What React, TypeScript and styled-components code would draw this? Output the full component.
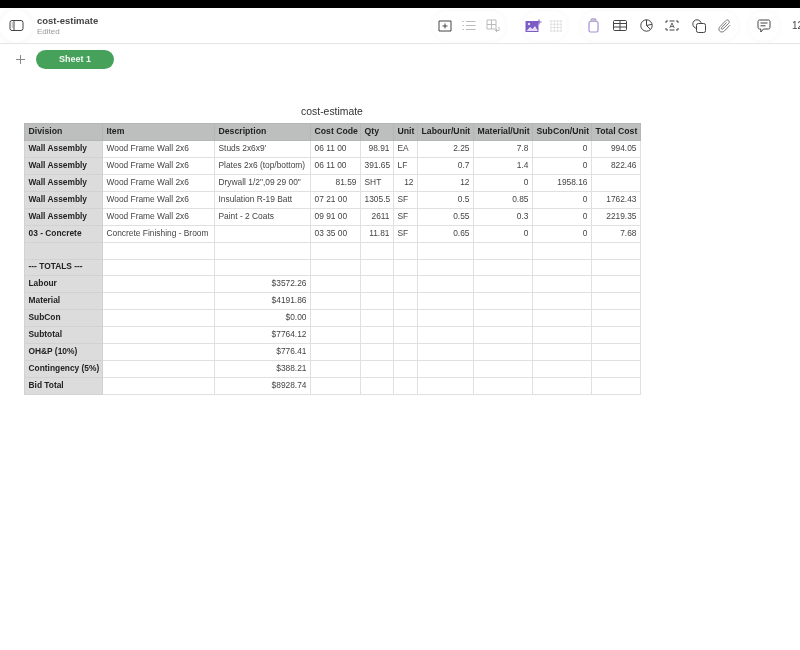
import styled, { createGlobalStyle } from "styled-components";

const GlobalStyle = createGlobalStyle`
  html, body {
    margin: 0;
    height: 100%;
    background: #fff;
    font-family: "Liberation Sans", Arial, sans-serif;
  }
`;

const columns = [78, 112, 96, 50, 33, 24, 56, 59, 59, 49];

const header = ["Division", "Item", "Description", "Cost Code", "Qty", "Unit", "Labour/Unit", "Material/Unit", "SubCon/Unit", "Total Cost"];

const rows = [
  ["Wall Assembly", "Wood Frame Wall 2x6", "Studs 2x6x9'", "06 11 00", "98.91", "EA", "2.25", "7.8", "0", "994.05"],
  ["Wall Assembly", "Wood Frame Wall 2x6", "Plates 2x6 (top/bottom)", "06 11 00", "391.65", "LF", "0.7", "1.4", "0", "822.46"],
  ["Wall Assembly", "Wood Frame Wall 2x6", 'Drywall 1/2",09 29 00"', "81.59", "SHT", "12", "12", "0", "1958.16", ""],
  ["Wall Assembly", "Wood Frame Wall 2x6", "Insulation R-19 Batt", "07 21 00", "1305.5", "SF", "0.5", "0.85", "0", "1762.43"],
  ["Wall Assembly", "Wood Frame Wall 2x6", "Paint - 2 Coats", "09 91 00", "2611", "SF", "0.55", "0.3", "0", "2219.35"],
  ["03 - Concrete", "Concrete Finishing - Broom", "", "03 35 00", "11.81", "SF", "0.65", "0", "0", "7.68"],
  ["", "", "", "", "", "", "", "", "", ""],
  ["--- TOTALS ---", "", "", "", "", "", "", "", "", ""],
  ["Labour", "", "$3572.26", "", "", "", "", "", "", ""],
  ["Material", "", "$4191.86", "", "", "", "", "", "", ""],
  ["SubCon", "", "$0.00", "", "", "", "", "", "", ""],
  ["Subtotal", "", "$7764.12", "", "", "", "", "", "", ""],
  ["OH&P (10%)", "", "$776.41", "", "", "", "", "", "", ""],
  ["Contingency (5%)", "", "$388.21", "", "", "", "", "", "", ""],
  ["Bid Total", "", "$8928.74", "", "", "", "", "", "", ""],
];

const isNumber = (v: string) => /^\$?[\d.]+$/.test(v);

export default function App() {
  return (
    <Page>
      <GlobalStyle />
      <TopStrip />
      <Toolbar>
        <SideButton>
          <svg width="15" height="13" viewBox="0 0 15 13" fill="none" stroke="#444" strokeWidth="1">
            <rect x="1" y="1.500" width="13" height="10" rx="2" />
            <path d="M5 1.500v10" />
            <path d="M2.800 4h.8M2.800 6h.8M2.800 8h.8" />
          </svg>
        </SideButton>
        <DocInfo>
          <DocName>cost-estimate</DocName>
          <DocStatus>Edited</DocStatus>
        </DocInfo>
        <InsertGroup>
          <Tool>
            <svg width="14" height="12" viewBox="0 0 14 12" fill="none" stroke="#444" strokeWidth="1">
              <path d="M1 1h12v10H1z" />
              <path d="M7 3.500v5M4.500 6h5" />
            </svg>
          </Tool>
          <Tool>
            <svg width="14" height="11" viewBox="0 0 14 11" fill="none" stroke="#bbb" strokeWidth="1">
              <path d="M4 1.500h9.500M4 5.500h9.500M4 9.500h9.500M.5 1.500h1.500M.5 5.500h1.500M.5 9.500h1.500" />
            </svg>
          </Tool>
          <Tool>
            <svg width="15" height="14" viewBox="0 0 15 14" fill="none" stroke="#bbb" strokeWidth="1">
              <path d="M1 1h9v9H1zM1 5.500h9M5.500 1v9" />
              <path d="M13 8v3.500H9.500M11 10l-1.500 1.500L11 13" />
            </svg>
          </Tool>
        </InsertGroup>
        <MediaGroup>
          <MediaTool>
            <svg width="17" height="14" viewBox="0 0 17 14">
              <rect x="0.500" y="2" width="13" height="11" fill="#7c5cc4" />
              <path d="M1.500 12l3.500-4 2.500 2 2.500-3 3 5z" fill="#e6dcf6" />
              <circle cx="4" cy="5" r="1.200" fill="#e6dcf6" />
              <path d="M14 .5v5M11.500 3h5" stroke="#7c5cc4" strokeWidth="1.100" />
            </svg>
          </MediaTool>
          <MediaTool>
            <svg width="12" height="12" viewBox="0 0 12 12" fill="none" stroke="#ccc" strokeWidth="1" strokeDasharray="1 1">
              <path d="M.5 1h11M.5 4.300h11M.5 7.600h11M.5 11h11" />
              <path d="M1 .5v11M4.300 .5v11M7.600 .5v11M11 .5v11" />
            </svg>
          </MediaTool>
        </MediaGroup>
        <ObjectGroup>
          <WideTool>
            <svg width="11" height="15" viewBox="0 0 11 15" fill="none" stroke="#a48fd6" strokeWidth="1.200">
              <rect x="1" y="3.500" width="9" height="10.500" rx="1.500" />
              <path d="M3 3.500V1.800c0-.6.4-1 1-1h3c.6 0 1 .4 1 1v1.700" fill="#c9c3d6" stroke="#b5abc9" />
            </svg>
          </WideTool>
          <WideTool>
            <svg width="14" height="11" viewBox="0 0 14 11" fill="none" stroke="#444" strokeWidth="1">
              <rect x="0.500" y="0.500" width="13" height="10" rx="1.200" />
              <path d="M.5 3.500h13M.5 7h13M7 .5v10" />
            </svg>
          </WideTool>
          <WideTool>
            <svg width="13" height="13" viewBox="0 0 13 13" fill="none" stroke="#444" strokeWidth="1">
              <circle cx="6.500" cy="6.500" r="5.700" />
              <path d="M6.500 .8v5.700l4 4M6.500 6.500l5.600-1.200" />
            </svg>
          </WideTool>
          <WideTool>
            <svg width="14" height="11" viewBox="0 0 14 11" fill="none" stroke="#444" strokeWidth="1">
              <path d="M1 3V1h2M11 1h2v2M13 8v2h-2M3 10H1V8M4.500 1h5M4.500 10h5" />
              <path d="M4.800 8L7 3l2.200 5M5.600 6.500h2.800" strokeWidth="0.800" />
            </svg>
          </WideTool>
          <WideTool>
            <svg width="14" height="14" viewBox="0 0 14 14" fill="none" stroke="#444" strokeWidth="1">
              <circle cx="5" cy="5" r="4.200" />
              <rect x="4.500" y="4.500" width="9" height="9" rx="1.800" fill="#fff" />
            </svg>
          </WideTool>
          <WideTool>
            <svg width="13" height="14" viewBox="0 0 13 14" fill="none" stroke="#777" strokeWidth="1">
              <path d="M11.800 6.300l-5.400 5.600c-1.400 1.400-3.500 1.500-4.700.3s-1.100-3.200.3-4.600l5.600-5.800c1-1 2.300-1.100 3.100-.3s.7 2.100-.3 3.100L5 9.800c-.5.5-1.100.6-1.500.2s-.3-1 .2-1.500l4.800-5" />
            </svg>
          </WideTool>
        </ObjectGroup>
        <CommentGroup>
          <Tool>
            <svg width="14" height="14" viewBox="0 0 14 14" fill="none" stroke="#444" strokeWidth="1">
              <path d="M2.500 1h9c.8 0 1.500.7 1.500 1.500v6c0 .8-.7 1.500-1.500 1.500H6.500L3.800 13v-3H2.500C1.700 10 1 9.300 1 8.500v-6C1 1.700 1.700 1 2.500 1z" />
              <path d="M3.500 4h7M3.500 6.800h5" />
            </svg>
          </Tool>
        </CommentGroup>
        <ZoomLabel>12</ZoomLabel>
      </Toolbar>
      <TabBar>
        <AddSheet>
          <svg width="9" height="9" viewBox="0 0 9 9" fill="none" stroke="#888" strokeWidth="1">
            <path d="M4.500 0v9M0 4.500h9" />
          </svg>
        </AddSheet>
        <SheetTab>Sheet 1</SheetTab>
      </TabBar>
      <Canvas>
        <SheetTitle>cost-estimate</SheetTitle>
        <Grid>
          <colgroup>
            {columns.map((w, i) => (
              <col key={i} style={{ width: w }} />
            ))}
          </colgroup>
          <thead>
            <tr>
              {header.map((h, i) => (
                <HeadCell key={i} $right={h === "Unit"}>{h}</HeadCell>
              ))}
            </tr>
          </thead>
          <tbody>
            {rows.map((row, r) => (
              <tr key={r}>
                {row.slice(0, 10).map((value, c) =>
                  c === 0 ? (
                    <LabelCell key={c}>{value}</LabelCell>
                  ) : (
                    <Cell key={c} $right={isNumber(value)}>{value}</Cell>
                  )
                )}
              </tr>
            ))}
          </tbody>
        </Grid>
      </Canvas>
    </Page>
  );
}

const Page = styled.div`
  width: 800px;
  height: 650px;
  overflow: hidden;
  background: #fff;
  filter: blur(0.3px);
`;

const TopStrip = styled.div`
  height: 8px;
  background: #000;
`;

const Toolbar = styled.div`
  display: flex;
  align-items: center;
  height: 35px;
  border-bottom: 1px solid #e6e6e6;
  overflow: hidden;
`;

const SideButton = styled.div`
  display: flex;
  align-items: center;
  justify-content: center;
  flex: 0 0 32px;
  height: 32px;
  border-radius: 50%;
  box-shadow: 0 0 8px rgba(0, 0, 0, 0.05);
`;

const DocInfo = styled.div`
  flex: 0 0 395px;
  margin-left: 5px;
`;

const DocName = styled.div`
  font-size: 9.500px;
  font-weight: 700;
  color: #444;
  line-height: 12px;
`;

const DocStatus = styled.div`
  font-size: 8px;
  color: #999;
  line-height: 10px;
`;

const ToolGroup = styled.div`
  display: flex;
  align-items: center;
  flex-shrink: 0;
  height: 30px;
  border-radius: 15px;
  box-shadow: 0 0 7px rgba(0, 0, 0, 0.04);
`;

const InsertGroup = styled(ToolGroup)`
  margin-left: 1px;
  margin-right: 17.500px;
`;

const MediaGroup = styled(ToolGroup)`
  margin-right: 14.300px;
`;

const ObjectGroup = styled(ToolGroup)`
  margin-right: 11px;
`;

const CommentGroup = styled(ToolGroup)`
  margin-right: 13px;
  padding: 0 3px;
`;

const Tool = styled.div`
  display: flex;
  align-items: center;
  justify-content: center;
  flex: 0 0 24px;
`;

const MediaTool = styled(Tool)`
  flex: 0 0 22px;
`;

const WideTool = styled(Tool)`
  flex: 0 0 26.200px;
`;

const ZoomLabel = styled.div`
  flex-shrink: 0;
  font-size: 10px;
  color: #444;
`;

const TabBar = styled.div`
  display: flex;
  align-items: center;
  height: 19px;
  margin-top: 6px;
`;

const AddSheet = styled.div`
  display: flex;
  align-items: center;
  justify-content: center;
  flex: 0 0 36px;
  padding-left: 4px;
  box-sizing: border-box;
`;

const SheetTab = styled.div`
  width: 78px;
  height: 19px;
  border-radius: 10px;
  background: #46a25a;
  color: #f2f7f3;
  font-size: 9px;
  font-weight: 700;
  line-height: 19px;
  text-align: center;
`;

const Canvas = styled.div`
  padding: 36px 0 0 24px;
`;

const SheetTitle = styled.div`
  width: 616px;
  height: 18px;
  font-size: 10.400px;
  line-height: 14px;
  color: #333;
  text-align: center;
`;

const Grid = styled.table`
  width: 616px;
  table-layout: fixed;
  border-collapse: collapse;
  font-size: 8.400px;
`;

const HeadCell = styled.th<{ $right?: boolean }>`
  height: 16.940px;
  padding: 0 3.500px 2px;
  box-sizing: border-box;
  background: #bdbfbe;
  border: 1px solid #b4b6b5;
  color: #222;
  font-size: 8.700px;
  font-weight: 700;
  text-align: ${(p) => (p.$right ? "right" : "left")};
  white-space: nowrap;
`;

const LabelCell = styled.td`
  height: 16.940px;
  padding: 0 3.500px 2px;
  box-sizing: border-box;
  background: #dcdcdc;
  border: 1px solid #d2d2d2;
  color: #222;
  font-weight: 700;
  white-space: nowrap;
`;

const Cell = styled.td<{ $right?: boolean }>`
  height: 16.940px;
  padding: 0 3.500px 2px;
  box-sizing: border-box;
  border: 1px solid #e0e0e0;
  color: #444;
  text-align: ${(p) => (p.$right ? "right" : "left")};
  white-space: nowrap;
  overflow: hidden;
`;
